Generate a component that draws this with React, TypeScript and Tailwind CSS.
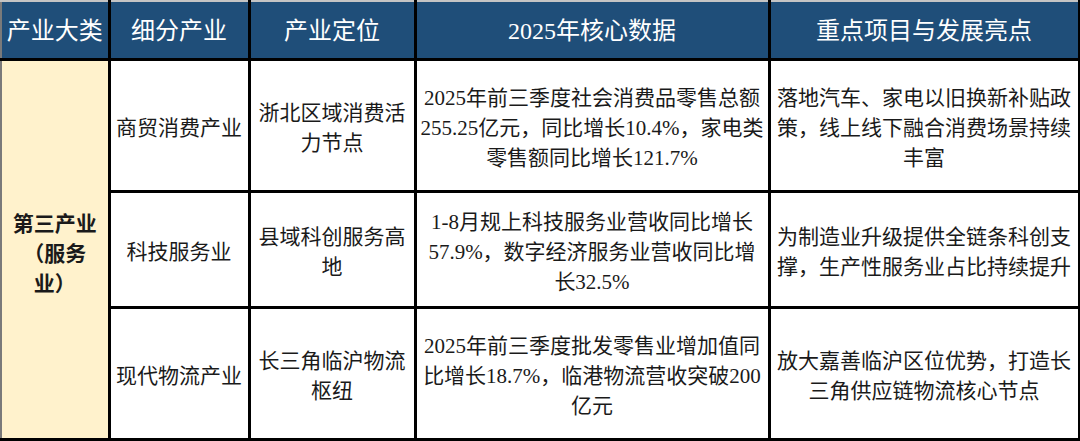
const FONT = { fontFamily: '"Liberation Serif", "Noto Sans CJK SC", serif' };

type Row = {
  sub: string;
  position: string[];
  data: string[];
  highlight: string[];
  h: string;
};

const ROWS: Row[] = [
  {
    sub: "商贸消费产业",
    position: ["浙北区域消费活", "力节点"],
    data: ["2025年前三季度社会消费品零售总额", "255.25亿元，同比增长10.4%，家电类", "零售额同比增长121.7%"],
    highlight: ["落地汽车、家电以旧换新补贴政", "策，线上线下融合消费场景持续", "丰富"],
    h: "h-[132px]",
  },
  {
    sub: "科技服务业",
    position: ["县域科创服务高", "地"],
    data: ["1-8月规上科技服务业营收同比增长", "57.9%，数字经济服务业营收同比增", "长32.5%"],
    highlight: ["为制造业升级提供全链条科创支", "撑，生产性服务业占比持续提升"],
    h: "h-[116px]",
  },
  {
    sub: "现代物流产业",
    position: ["长三角临沪物流", "枢纽"],
    data: ["2025年前三季度批发零售业增加值同", "比增长18.7%，临港物流营收突破200", "亿元"],
    highlight: ["放大嘉善临沪区位优势，打造长", "三角供应链物流核心节点"],
    h: "h-[132px]",
  },
];

function Lines({ lines }: { lines: string[] }) {
  return (
    <>
      {lines.map((l) => (
        <div key={l} className="whitespace-nowrap">
          {l}
        </div>
      ))}
    </>
  );
}

export default function App() {
  return (
    <div className="w-[1080px] h-[441px] bg-white overflow-hidden" style={FONT}>
      <table className="table-fixed border-collapse w-[1078px] text-[21px] leading-[30px] text-[#1a1a1a]">
        <colgroup>
          <col className="w-[108px]" />
          <col className="w-[140px]" />
          <col className="w-[166px]" />
          <col className="w-[354px]" />
          <col className="w-[310px]" />
        </colgroup>
        <thead>
          <tr className="h-[58px] bg-[#1f4e79] text-white text-[24px] font-normal">
            {["产业大类", "细分产业", "产业定位", "2025年核心数据", "重点项目与发展亮点"].map((t, i) => (
              <th
                key={t}
                className={`border-[3px] border-black border-t-2 border-t-[#c4c4c4] font-normal p-0 pt-[2px] whitespace-nowrap ${
                  i === 0 ? "border-l-2 border-l-[#7a7a7a]" : ""
                }`}
              >
                {t}
              </th>
            ))}
          </tr>
        </thead>
        <tbody>
          {ROWS.map((r, idx) => (
            <tr key={r.sub} className={r.h}>
              {idx === 0 && (
                <td
                  rowSpan={3}
                  className="border-[3px] border-black border-l-2 border-l-[#7a7a7a] bg-[#fff2cc] text-center font-bold align-middle p-0 pt-[10px]"
                >
                  <div>第三产业</div>
                  <div>（服务</div>
                  <div>业）</div>
                </td>
              )}
              <td className="border-[3px] border-black text-center align-middle p-0 pt-[6px]">{r.sub}</td>
              <td className="border-[3px] border-black text-center align-middle p-0 pt-[6px]">
                <Lines lines={r.position} />
              </td>
              <td className="border-[3px] border-black text-center align-middle p-0 pt-[6px]">
                <Lines lines={r.data} />
              </td>
              <td className="border-[3px] border-black text-center align-middle p-0 pt-[6px]">
                <Lines lines={r.highlight} />
              </td>
            </tr>
          ))}
        </tbody>
      </table>
    </div>
  );
}
